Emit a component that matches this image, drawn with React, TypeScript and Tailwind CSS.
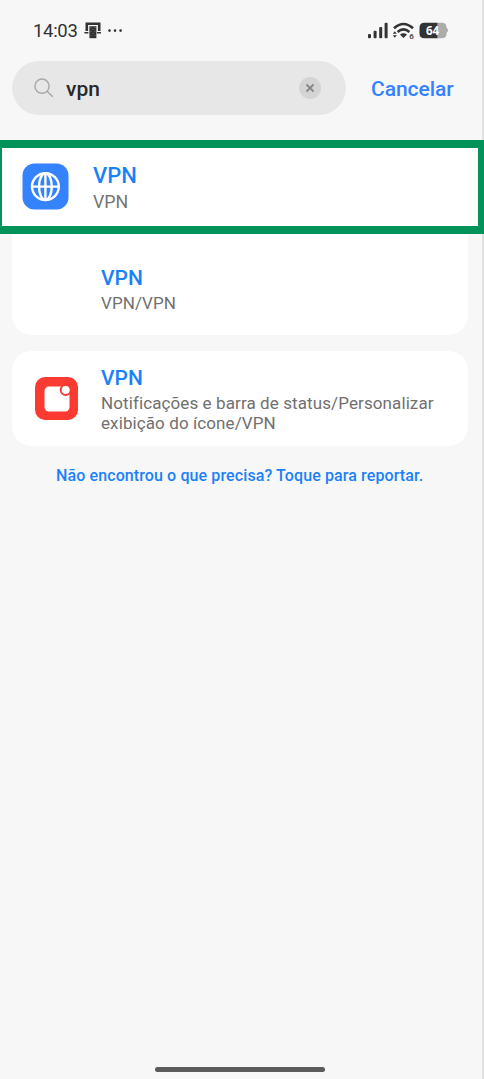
import type { ReactNode } from "react";

export default function App() {
  return (
    <div className="relative flex h-[1079px] w-[484px] flex-col overflow-hidden bg-[#f7f7f7] font-['Roboto',sans-serif]">
      <div className="absolute inset-y-0 right-0 w-0.5 bg-[#e2e2e2]" />
      <StatusBar />
      <SearchBar />
      <main className="mt-[25px] flex flex-1 flex-col">
        <div className="z-10 flex h-[94px] items-center border-y-8 border-l-2 border-r-[6px] border-[#02935b] bg-white pb-0.5 pl-5">
          <GlobeIcon />
          <div className="ml-6 mt-[5px]">
            <div className="text-[22px] font-medium leading-[27px] text-[#1b81fb]">VPN</div>
            <div className="text-[17.8px] leading-[26px] text-[#757575]">VPN</div>
          </div>
        </div>

        <Card className="h-[101px] rounded-b-[20px] pt-[31px]">
          <div className="w-[43px]" />
          <Result title="VPN" path="VPN/VPN" />
        </Card>

        <Card className="mt-4 h-[95px] rounded-[20px] pt-[14px]">
          <NotificationIcon />
          <Result
            title="VPN"
            path={
              <>
                Notificações e barra de status/Personalizar
                <br />
                exibição do ícone/VPN
              </>
            }
          />
        </Card>

        <a className="mt-5 pl-14 text-[16px] font-medium leading-5 tracking-[0.11px] whitespace-nowrap text-[#1b81fb]">
          Não encontrou o que precisa? Toque para reportar.
        </a>
        <div className="mt-auto mb-[7.5px] ml-[155px] h-[5px] w-[170px] rounded-full bg-[#5b5b5b]" />
      </main>
    </div>
  );
}

function Card({ className, children }: { className: string; children: ReactNode }) {
  return (
    <section className={`ml-3 flex w-[456px] items-start bg-white pl-[23px] ${className}`}>
      {children}
    </section>
  );
}

function Result({ title, path }: { title: string; path: ReactNode }) {
  return (
    <div className="ml-[23px] whitespace-nowrap">
      <div className="text-[21px] font-medium leading-[26px] text-[#1b81fb]">{title}</div>
      <div className="mt-0.5 text-[17px] leading-5 tracking-[0.1px] text-[#707070]">{path}</div>
    </div>
  );
}

function StatusBar() {
  return (
    <header className="flex h-[61px] shrink-0 items-center pl-[33px] text-[#333]">
      <span className="mt-[3px] w-[51px] text-[18.5px] tracking-[-0.3px]">14:03</span>
      <svg width="18" height="17" viewBox="0 0 18 17" fill="none">
        <path d="M2.8 9V1.8h12.4V9" stroke="currentColor" strokeWidth="2.6" />
        <path d="M.4 10.8h4M13 10.8h4" stroke="currentColor" strokeWidth="1.4" />
        <path d="M5.4 4.2h7v12h-7z" fill="currentColor" />
        <path
          d="M7 5v1M11 5v1M9 7v1M7 9v1M11 9v1M9 11v1M7 13v1M11 13v1"
          stroke="#777"
          strokeWidth="0.8"
        />
      </svg>
      <svg width="16" height="4" viewBox="0 0 16 4" fill="currentColor" className="ml-1.5">
        <circle cx="1.5" cy="1.6" r="1.3" />
        <circle cx="7" cy="1.6" r="1.3" />
        <circle cx="12.6" cy="1.6" r="1.3" />
      </svg>
      <svg width="20" height="18" viewBox="0 0 20 18" fill="currentColor" className="ml-[244px]">
        <rect x="0" y="12" width="3" height="4.2" rx="1" />
        <rect x="5.6" y="8.8" width="3" height="7.4" rx="1" />
        <rect x="11.2" y="5" width="3" height="11.2" rx="1" />
        <rect x="16.6" y="0.8" width="3" height="15.4" rx="1" />
      </svg>
      <svg width="23" height="18" viewBox="0 0 23 18" fill="none" className="ml-1">
        <path d="M2 6.2Q11.5-2.2 21 6.2" stroke="currentColor" strokeWidth="2.6" />
        <path d="M5.6 10q5.9-5.2 11.8 0" stroke="currentColor" strokeWidth="2.5" />
        <path
          d="M8 12.4q3.5-2.4 7 0L11.5 16zM.8 11.8l2-2.6 2 2.6zM.8 13.2l2 2.6 2-2.6z"
          fill="currentColor"
        />
        <text x="17.2" y="16.7" fill="currentColor" fontSize="8" fontWeight="500">
          6
        </text>
      </svg>
      <svg width="30" height="17" viewBox="0 0 30 17" className="ml-[4px]">
        <path
          d="M18.5 .7h4.2Q27.5.7 27.5 5v.8q3.2 2.5 0 5V12q0 4.3-4.8 4.3h-4.2z"
          fill="#acacac"
        />
        <path d="M18.5 .7v15.6h-13Q.5 16.3 .5 11.5v-6Q.5.7 5.5.7z" fill="currentColor" />
        <text
          x="7"
          y="12.8"
          fill="white"
          fontSize="11.5"
          fontWeight="700"
          className="font-['Open_Sans',sans-serif]"
        >
          64
        </text>
      </svg>
    </header>
  );
}

function SearchBar() {
  return (
    <div className="flex h-[54px] shrink-0 items-center pl-3">
      <div className="flex h-full w-[334px] items-center rounded-full bg-[#e7e7e7] pl-[22px] pr-[25px]">
        <svg width="20" height="20" viewBox="0 0 20 20" fill="none" stroke="#a8a8a8" strokeWidth="1.5">
          <circle cx="8" cy="8.2" r="7.1" />
          <path d="M13 13.2l5.8 5.5" />
        </svg>
        <span className="ml-3 mt-[3px] text-[21px] font-medium text-[#292929]">vpn</span>
        <svg width="22" height="22" viewBox="0 0 22 22" fill="none" className="ml-auto">
          <circle cx="11" cy="11" r="11" fill="#d4d4d4" />
          <path d="M7.5 7.5l7 7M14.5 7.5l-7 7" stroke="#868686" strokeWidth="1.8" />
        </svg>
      </div>
      <span className="ml-[25px] mt-[3px] text-[21px] font-medium tracking-[-0.05px] text-[#3482ff]">
        Cancelar
      </span>
    </div>
  );
}

function GlobeIcon() {
  return (
    <svg width="47" height="47" viewBox="0 0 47 47" fill="none">
      <rect x="0.5" y="0.5" width="46" height="46" rx="12" fill="#3482fc" />
      <g stroke="white" strokeWidth="2.4">
        <circle cx="23.4" cy="23.6" r="13.4" />
        <ellipse cx="23.4" cy="23.6" rx="6.4" ry="13.4" />
        <path d="M23.4 10.2V37M10 23.6h27" />
      </g>
    </svg>
  );
}

function NotificationIcon() {
  return (
    <svg width="43" height="43" viewBox="0 0 43 43" className="mt-3">
      <rect width="43" height="43" rx="10" fill="#fb3b32" />
      <rect x="9.5" y="9.5" width="25" height="25" rx="4.5" fill="white" />
      <circle cx="30.7" cy="13" r="5" fill="white" stroke="#fb3b32" strokeWidth="2" />
    </svg>
  );
}
